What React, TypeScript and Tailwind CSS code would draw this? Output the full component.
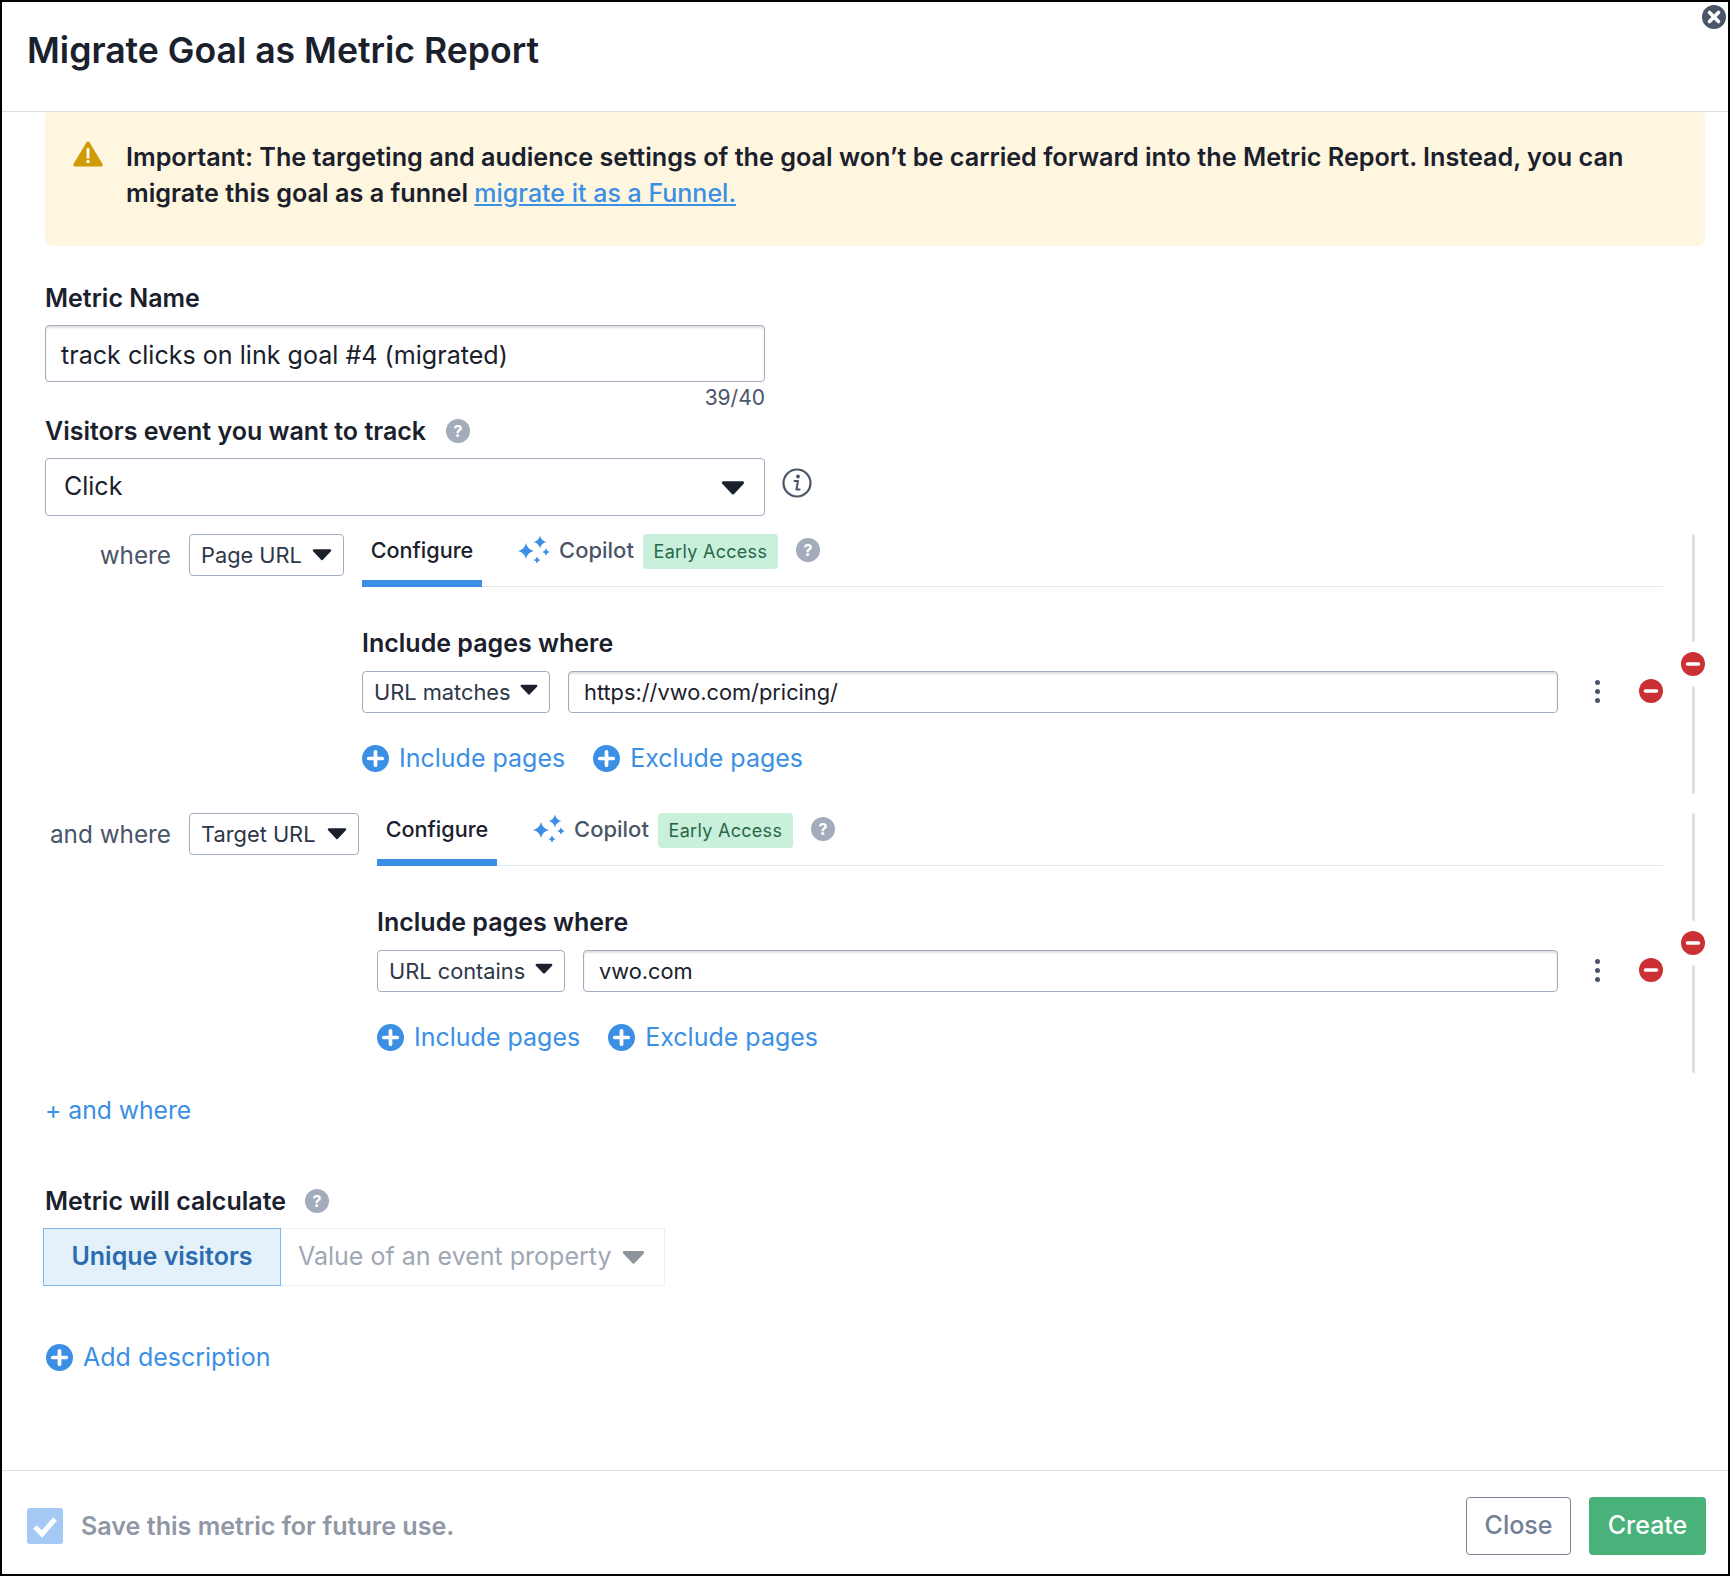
import type { ReactNode } from "react";

const star = (cx: number, cy: number, r: number) => {
	const k = r * 0.18;
	return `M${cx} ${cy - r}Q${cx + k} ${cy - k} ${cx + r} ${cy}Q${cx + k} ${cy + k} ${cx} ${cy + r}Q${cx - k} ${cy + k} ${cx - r} ${cy}Q${cx - k} ${cy - k} ${cx} ${cy - r}Z`;
};

function Caret({ className }: { className: string }) {
	return (
		<svg viewBox="0 0 20 12" className={className}>
			<path d="M2 2h16l-8 8.5z" fill="currentColor" stroke="currentColor" strokeWidth="2.5" strokeLinejoin="round" />
		</svg>
	);
}

function Help() {
	return (
		<span className="flex h-[24px] w-[24px] shrink-0 items-center justify-center rounded-full bg-[#a3acba] text-[16px] font-bold leading-none text-white">
			?
		</span>
	);
}

function PlusCircle() {
	return (
		<svg viewBox="0 0 26 26" className="h-[27px] w-[27px] shrink-0">
			<circle cx="13" cy="13" r="13" fill="#3b8fe4" />
			<path d="M13 6.5v13M6.5 13h13" stroke="#fff" strokeWidth="3.6" strokeLinecap="round" />
		</svg>
	);
}

function MinusCircle() {
	return (
		<svg viewBox="0 0 24 24" className="h-[24px] w-[24px] shrink-0">
			<circle cx="12" cy="12" r="12" fill="#cb3034" />
			<path d="M6.5 12h11" stroke="#fff" strokeWidth="3.6" strokeLinecap="round" />
		</svg>
	);
}

function Sparkles() {
	return (
		<svg viewBox="0 0 32 30" className="h-[30px] w-[32px] shrink-0">
			<path d={star(8, 15, 8)} fill="#3b8fe4" />
			<path d={star(22, 6, 6.5)} fill="#3b8fe4" />
			<path d={star(28, 16, 4)} fill="#3b8fe4" />
			<path d={star(19, 24, 3.5)} fill="#3b8fe4" />
		</svg>
	);
}

function AddLink({ label }: { label: string }) {
	return (
		<div className="flex items-center gap-[10px] text-[25px] leading-none text-[#3b8fe4]">
			<PlusCircle />
			<span>{label}</span>
		</div>
	);
}

function SmallSelect({ label, width, caret }: { label: string; width: string; caret: string }) {
	return (
		<div className={`flex h-[42px] shrink-0 items-center justify-between rounded border border-[#a0aec0] pl-[11px] pr-[11px] text-[21.8px] text-[#2d3748] ${width}`}>
			<span>{label}</span>
			<Caret className={caret} />
		</div>
	);
}

function Condition({
	where,
	field,
	fieldWidth,
	match,
	matchWidth,
	url,
}: {
	where: string;
	field: string;
	fieldWidth: string;
	match: string;
	matchWidth: string;
	url: string;
}) {
	return (
		<div className="flex h-[260px]">
			<div className="w-[126px] shrink-0 pt-[6px] text-right text-[24.3px] leading-[30px] text-[#4a5568]">{where}</div>
			<div className="ml-[18px] shrink-0">
				<SmallSelect label={field} width={fieldWidth} caret="mb-[2px] h-[13px] w-[20px] text-[#1a202c]" />
			</div>
			<div className="ml-[18px] min-w-0 flex-1">
				<div className="flex h-[53px] border-b border-[#e2e8f0] text-[22px]">
					<div className="h-[53px] w-[120px] border-b-[7px] border-[#3b8fe4] pt-[2px] text-center text-[21.6px] font-medium leading-[28px] text-[#1a202c]">
						Configure
					</div>
					<div className="ml-[36px] flex h-[34px] items-center text-[#4a5568]">
						<Sparkles />
						<span className="-mt-[2px] ml-[9px] font-medium">Copilot</span>
						<span className="ml-[9px] flex h-[35px] w-[135px] items-center justify-center rounded bg-[#c8f0da] text-[18px] tracking-[0.3px] text-[#276749]">
							Early Access
						</span>
						<span className="-mt-[2px] ml-[18px]">
							<Help />
						</span>
					</div>
				</div>
				<div className="mt-[41px] text-[25px] font-semibold leading-[30px] text-[#1a202c]">Include pages where</div>
				<div className="mt-[13px] flex items-center">
					<SmallSelect label={match} width={matchWidth} caret="mb-[6px] h-[11px] w-[18px] text-[#1a202c]" />
					<div className="ml-[18px] flex h-[42px] flex-1 items-center rounded border border-[#a0aec0] px-[15px] text-[21.8px] text-[#1a202c] shadow-[inset_0_2px_2px_rgba(0,0,0,0.12)]">
						{url}
					</div>
					<div className="-mt-[2px] ml-[37px] flex w-[5px] flex-col gap-[4px]">
						<span className="h-[5px] w-[5px] rounded-full bg-[#4a5568]" />
						<span className="h-[5px] w-[5px] rounded-full bg-[#4a5568]" />
						<span className="h-[5px] w-[5px] rounded-full bg-[#4a5568]" />
					</div>
					<div className="-mt-[2px] ml-[39px]">
						<MinusCircle />
					</div>
				</div>
				<div className="mt-[32px] flex gap-[28px]">
					<AddLink label="Include pages" />
					<AddLink label="Exclude pages" />
				</div>
			</div>
			<div className="ml-[18px] flex w-[24px] shrink-0 flex-col items-center gap-[10px]">
				<div className="w-[3px] flex-1 rounded-full bg-[#dcdfe6]" />
				<MinusCircle />
				<div className="w-[3px] flex-1 rounded-full bg-[#dcdfe6]" />
			</div>
		</div>
	);
}

function Label({ children }: { children: ReactNode }) {
	return <div className="text-[25px] font-semibold leading-[30px] text-[#1a202c]">{children}</div>;
}

export default function App() {
	return (
		<div className="relative flex h-[1576px] w-[1730px] flex-col border-2 border-black bg-white font-[Inter,sans-serif]">
			<svg viewBox="0 0 24 24" className="absolute right-[2px] top-[3px] h-[24px] w-[24px]">
				<circle cx="12" cy="12" r="12" fill="#4a5568" />
				<path d="M7.5 7.5l9 9M16.5 7.5l-9 9" stroke="#fff" strokeWidth="3.6" strokeLinecap="round" />
			</svg>

			<header className="flex h-[110px] shrink-0 items-center border-b border-[#dcdfe4] pb-[12px] pl-[25px]">
				<h1 className="text-[35.6px] font-semibold leading-none text-[#1a202c]">Migrate Goal as Metric Report</h1>
			</header>

			<main className="flex-1 pl-[43px] pr-[23px]">
				<div className="flex h-[134px] rounded-b-lg rounded-t-sm bg-[#fff6e0] pl-[28px] pr-[60px] pt-[27px]">
					<svg viewBox="0 0 32 28" className="mt-[1px] h-[28px] w-[30px] shrink-0">
						<path d="M16 2.5L30 25.5H2z" fill="#cf9a05" stroke="#cf9a05" strokeWidth="3.5" strokeLinejoin="round" />
						<path d="M16 9v8.5" stroke="#fff" strokeWidth="3" strokeLinecap="round" />
						<circle cx="16" cy="22" r="1.8" fill="#fff" />
					</svg>
					<p className="ml-[23px] text-[25.2px] font-semibold leading-[36px] text-[#1a202c]">
						Important: The targeting and audience settings of the goal won’t be carried forward into the Metric Report. Instead, you can migrate this goal as a funnel{" "}
						<span className="text-[25px] font-medium text-[#3b8fe4] underline">migrate it as a Funnel.</span>
					</p>
				</div>

				<div className="mt-[37px]">
					<Label>Metric Name</Label>
				</div>
				<div className="mt-[12px] flex h-[57px] w-[720px] items-center rounded border border-[#a0aec0] px-[15px] pt-[4px] text-[25.1px] text-[#1a202c] shadow-[inset_0_2px_2px_rgba(0,0,0,0.12)]">
					track clicks on link goal #4 (migrated)
				</div>
				<div className="mt-[2px] w-[720px] text-right text-[21px] leading-[28px] text-[#4a5568]">39/40</div>
				<div className="mt-[4px] flex items-center gap-[20px]">
					<Label>Visitors event you want to track</Label>
					<Help />
				</div>
				<div className="mt-[12px] flex items-start">
					<div className="flex h-[58px] w-[720px] items-center justify-between rounded border border-[#a0aec0] pl-[18px] pr-[19px] text-[25px] text-[#1a202c]">
						<span>Click</span>
						<Caret className="h-[15px] w-[24px] text-[#1a202c]" />
					</div>
					<svg viewBox="0 0 30 30" className="ml-[17px] mt-[10px] h-[30px] w-[30px]">
						<circle cx="15" cy="15" r="13.5" fill="none" stroke="#4a5568" strokeWidth="2.2" />
						<circle cx="16" cy="8.5" r="1.9" fill="#4a5568" />
						<path d="M12.5 13h3.5l-1.6 8.5h3.2" fill="none" stroke="#4a5568" strokeWidth="2" strokeLinecap="round" strokeLinejoin="round" />
					</svg>
				</div>

				<div className="mt-[18px] flex flex-col gap-[19px]">
					<Condition where="where" field="Page URL" fieldWidth="w-[155px]" match="URL matches" matchWidth="w-[188px]" url="https://vwo.com/pricing/" />
					<Condition where="and where" field="Target URL" fieldWidth="w-[170px]" match="URL contains" matchWidth="w-[188px]" url="vwo.com" />
				</div>

				<div className="mt-[22px] text-[24.7px] leading-[30px] text-[#3b8fe4]">+ and where</div>

				<div className="mt-[61px] flex items-center gap-[19px]">
					<Label>Metric will calculate</Label>
					<Help />
				</div>
				<div className="-ml-[2px] mt-[12px] flex h-[58px] w-[622px] text-[25px]">
					<div className="flex w-[238px] items-center justify-center border border-[#7fb8ee] bg-[#e4f1fb] font-semibold text-[#2b6cb0]">
						Unique visitors
					</div>
					<div className="flex flex-1 items-center justify-between border border-l-0 border-[#edf0f3] pl-[17px] pr-[19px] text-[#a0a7b4]">
						<span>Value of an event property</span>
						<Caret className="h-[14px] w-[23px] text-[#8f939b]" />
					</div>
				</div>
				<div className="ml-[1px] mt-[56px]">
					<div className="flex items-center gap-[10px] text-[25px] leading-[30px] text-[#3b8fe4]">
						<PlusCircle />
						<span>Add description</span>
					</div>
				</div>
			</main>

			<footer className="flex h-[104px] shrink-0 items-center justify-between border-t border-[#e0e2e6] pl-[25px] pr-[22px] pt-[7px]">
				<div className="flex items-center gap-[18px]">
					<div className="flex h-[36px] w-[36px] items-center justify-center rounded-[3px] bg-[#a3c9f4]">
						<svg viewBox="0 0 36 36" className="h-[36px] w-[36px]">
							<path d="M8 19l7 7L28 11" fill="none" stroke="#fff" strokeWidth="5" />
						</svg>
					</div>
					<span className="mt-[1px] text-[25.1px] font-semibold text-[#9098a6]">Save this metric for future use.</span>
				</div>
				<div className="flex gap-[18px] text-[25px] font-medium">
					<div className="flex h-[58px] w-[105px] items-center justify-center rounded border border-[#7b8495] text-[#718096]">Close</div>
					<div className="flex h-[58px] w-[117px] items-center justify-center rounded bg-[#48b27a] text-white">Create</div>
				</div>
			</footer>
		</div>
	);
}
